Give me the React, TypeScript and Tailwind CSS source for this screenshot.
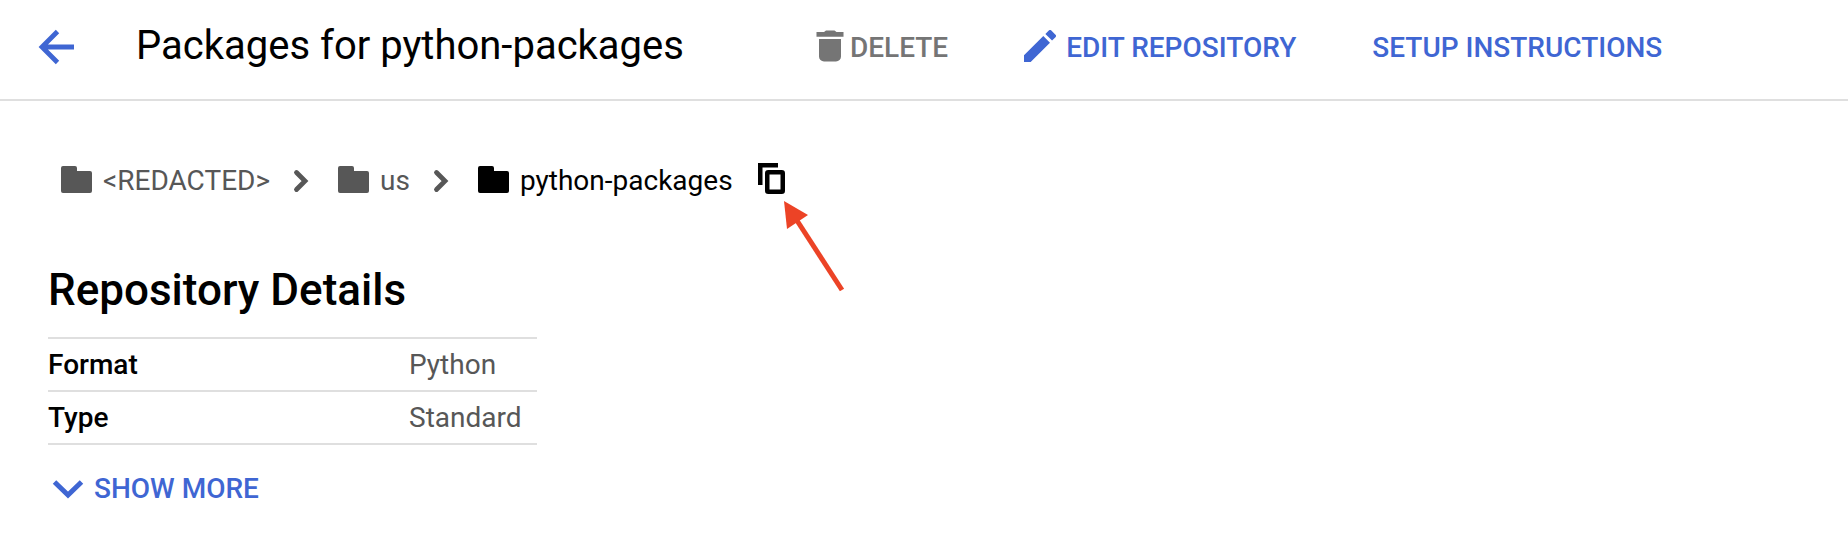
import type { ReactNode } from "react";

function Arrow() {
  return (
    <svg className="block h-10 w-10" viewBox="0 0 40 40" fill="none" stroke="currentColor" strokeWidth="4.800">
      <path d="M38 21H6M21.500 5.500L6 21L21.500 36.500" />
    </svg>
  );
}

function Trash() {
  return (
    <svg className="block h-8 w-7" viewBox="0 0 28 32" fill="currentColor">
      <path d="M.5 2h7.500l2-1.500h8.500l2 1.500h7v4.800H.5zM3 9h22v17.500a5 5 0 0 1-5 5H8a5 5 0 0 1-5-5z" />
    </svg>
  );
}

function Pencil() {
  return (
    <svg className="block h-8 w-8" viewBox="3 3 18 18" fill="currentColor">
      <path d="M3 17.250V21h3.750L17.610 10.140l-3.750-3.750L3 17.250zM20.710 7.040a1 1 0 0 0 0-1.410l-2.340-2.340a1 1 0 0 0-1.410 0l-1.930 1.930 3.750 3.750 1.930-1.930z" />
    </svg>
  );
}

function Folder() {
  return (
    <svg className="mb-1 block h-7 w-8" viewBox="0 0 32 28" fill="currentColor">
      <path d="M2 1h12a2 2 0 0 1 2 2v3h13a2 2 0 0 1 2 2v18a2 2 0 0 1-2 2H2a2 2 0 0 1-2-2V3a2 2 0 0 1 2-2z" />
    </svg>
  );
}

function ChevronRight() {
  return (
    <svg className="block h-6 w-4" viewBox="0 0 16 24" fill="none" stroke="currentColor" strokeWidth="4.800" strokeLinecap="round">
      <path d="M3.500 3.500L12 12L3.500 20.500" />
    </svg>
  );
}

function ChevronDown() {
  return (
    <svg className="block h-5 w-8" viewBox="0 0 32 20" fill="none" stroke="currentColor" strokeWidth="5">
      <path d="M2.500 3L16 16L29.500 3" />
    </svg>
  );
}

function Copy() {
  return (
    <svg className="block h-8 w-7" viewBox="0 0 28 32" fill="none" stroke="currentColor" strokeWidth="4.500">
      <path d="M2.250 22V2.250H20" />
      <rect x="9.250" y="9.250" width="15.500" height="19.500" rx="1" />
    </svg>
  );
}

function Crumb({ children, current }: { children: ReactNode; current?: boolean }) {
  return (
    <a href="#" aria-current={current ? "page" : undefined} className={current ? "flex items-center gap-2.5 text-black" : "flex items-center gap-2.5"}>
      <Folder />
      <span>{children}</span>
    </a>
  );
}

const details = [
  ["Format", "Python"],
  ["Type", "Standard"],
];

export default function App() {
  return (
    <div className="min-h-screen bg-white font-['Roboto',sans-serif] text-[28px] leading-8 text-[#575757]">
      <header className="flex h-[101px] items-center border-b-2 border-[#dfdfdf] pb-2 pl-9 font-medium whitespace-nowrap text-[#3f66d3]">
        <button type="button" aria-label="Back"><Arrow /></button>
        <h1 className="ml-15 text-[40px] leading-12 font-normal text-black">Packages for python-packages</h1>
        <div className="ml-[132px] flex items-center gap-[76px]">
          <button type="button" disabled className="flex items-center gap-1.5 text-[#757575]"><Trash /><span className="pt-1">DELETE</span></button>
          <button type="button" className="flex items-center gap-2.5"><Pencil /><span className="pt-1">EDIT REPOSITORY</span></button>
          <button type="button" className="pt-1">SETUP INSTRUCTIONS</button>
        </div>
      </header>
      <main className="px-12 pt-[62px]">
        <nav aria-label="Breadcrumb" className="flex items-center pl-[13px] whitespace-nowrap">
          <Crumb>&lt;REDACTED&gt;</Crumb>
          <span className="mr-[29px] ml-[23px]"><ChevronRight /></span>
          <Crumb>us</Crumb>
          <span className="mr-[29px] ml-[23px]"><ChevronRight /></span>
          <Crumb current>python-packages</Crumb>
          <span className="relative ml-[25px] text-black">
            <button type="button" aria-label="Copy path" className="mb-1 block"><Copy /></button>
            <svg className="absolute top-[38px] left-[25px] h-[94px] w-16" viewBox="0 0 64 94" aria-hidden="true">
              <path d="M13 18L59 89" stroke="#ec4326" strokeWidth="5" />
              <path d="M1 0L25 14L4 28Z" fill="#ec4326" />
            </svg>
          </span>
        </nav>
        <h2 className="mt-[63px] text-[44px] leading-[56px] font-medium text-black">Repository Details</h2>
        <table className="mt-[19px] w-[489px] border-collapse text-left">
          <tbody>
            {details.map(([label, value]) => (
              <tr key={label} className="h-[53px] border-y-2 border-[#dfdfdf]">
                <th scope="row" className="w-[361px] p-0 font-medium text-black">{label}</th>
                <td className="p-0">{value}</td>
              </tr>
            ))}
          </tbody>
        </table>
        <button type="button" className="mt-7 ml-1 flex items-center gap-2.5 font-medium text-[#3f66d3]"><ChevronDown />SHOW MORE</button>
      </main>
    </div>
  );
}
